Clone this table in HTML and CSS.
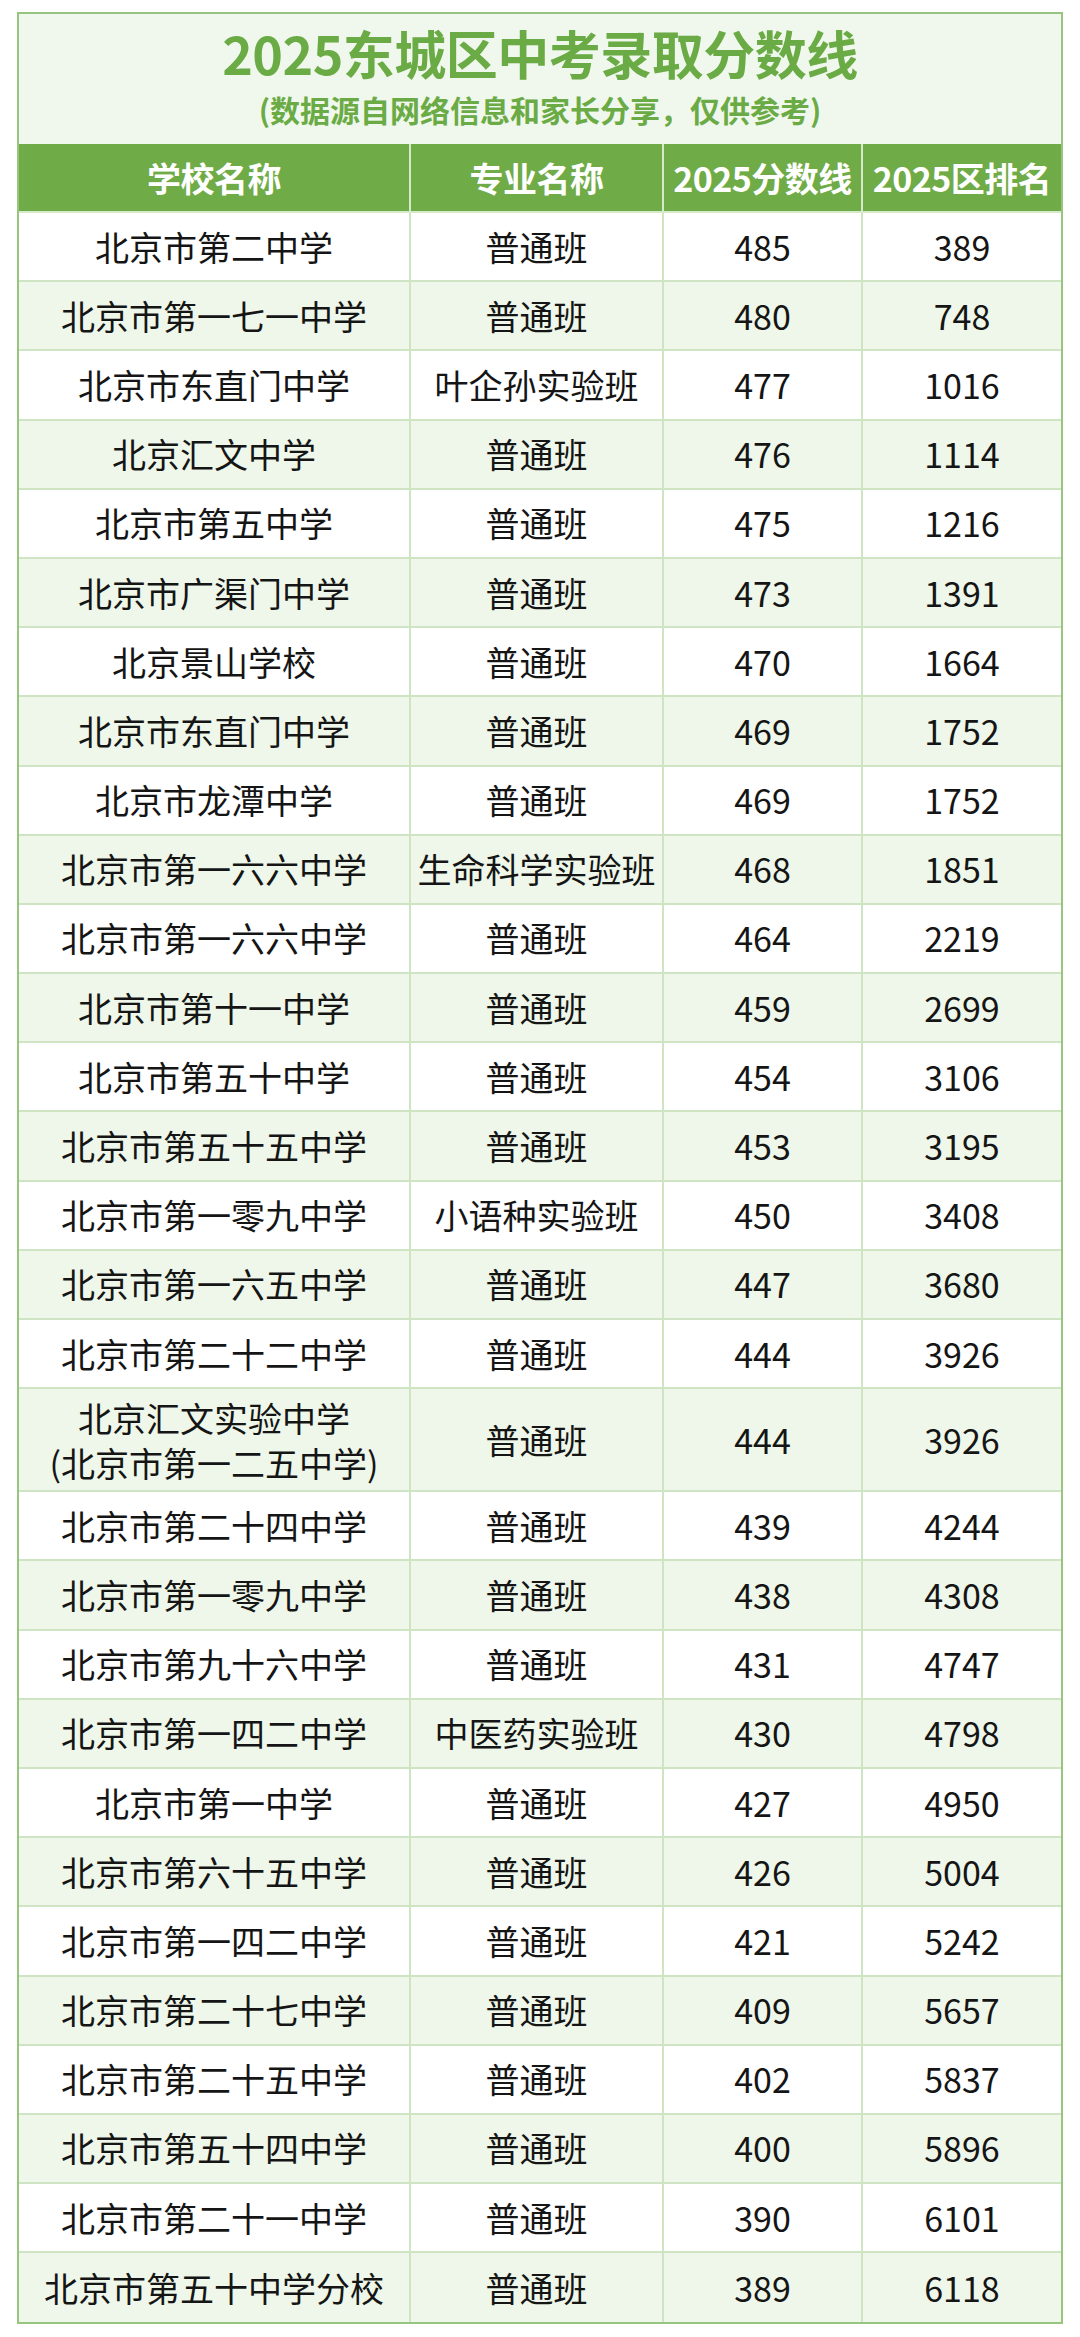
FILE: index.html
```html
<!DOCTYPE html>
<html lang="zh-CN">
<head>
<meta charset="utf-8">
<title>2025东城区中考录取分数线</title>
<link rel="stylesheet" href="styles.css">
</head>
<body>
<div class="sheet">
  <div class="title-box">
    <div class="title">2025东城区中考录取分数线</div>
    <div class="subtitle">(数据源自网络信息和家长分享，仅供参考)</div>
  </div>
  <div class="row head">
    <div class="cell">学校名称</div>
    <div class="cell">专业名称</div>
    <div class="cell">2025分数线</div>
    <div class="cell">2025区排名</div>
  </div>
  <div class="row"><div class="cell">北京市第二中学</div><div class="cell">普通班</div><div class="cell">485</div><div class="cell">389</div></div>
  <div class="row alt"><div class="cell">北京市第一七一中学</div><div class="cell">普通班</div><div class="cell">480</div><div class="cell">748</div></div>
  <div class="row"><div class="cell">北京市东直门中学</div><div class="cell">叶企孙实验班</div><div class="cell">477</div><div class="cell">1016</div></div>
  <div class="row alt"><div class="cell">北京汇文中学</div><div class="cell">普通班</div><div class="cell">476</div><div class="cell">1114</div></div>
  <div class="row"><div class="cell">北京市第五中学</div><div class="cell">普通班</div><div class="cell">475</div><div class="cell">1216</div></div>
  <div class="row alt"><div class="cell">北京市广渠门中学</div><div class="cell">普通班</div><div class="cell">473</div><div class="cell">1391</div></div>
  <div class="row"><div class="cell">北京景山学校</div><div class="cell">普通班</div><div class="cell">470</div><div class="cell">1664</div></div>
  <div class="row alt"><div class="cell">北京市东直门中学</div><div class="cell">普通班</div><div class="cell">469</div><div class="cell">1752</div></div>
  <div class="row"><div class="cell">北京市龙潭中学</div><div class="cell">普通班</div><div class="cell">469</div><div class="cell">1752</div></div>
  <div class="row alt"><div class="cell">北京市第一六六中学</div><div class="cell">生命科学实验班</div><div class="cell">468</div><div class="cell">1851</div></div>
  <div class="row"><div class="cell">北京市第一六六中学</div><div class="cell">普通班</div><div class="cell">464</div><div class="cell">2219</div></div>
  <div class="row alt"><div class="cell">北京市第十一中学</div><div class="cell">普通班</div><div class="cell">459</div><div class="cell">2699</div></div>
  <div class="row"><div class="cell">北京市第五十中学</div><div class="cell">普通班</div><div class="cell">454</div><div class="cell">3106</div></div>
  <div class="row alt"><div class="cell">北京市第五十五中学</div><div class="cell">普通班</div><div class="cell">453</div><div class="cell">3195</div></div>
  <div class="row"><div class="cell">北京市第一零九中学</div><div class="cell">小语种实验班</div><div class="cell">450</div><div class="cell">3408</div></div>
  <div class="row alt"><div class="cell">北京市第一六五中学</div><div class="cell">普通班</div><div class="cell">447</div><div class="cell">3680</div></div>
  <div class="row"><div class="cell">北京市第二十二中学</div><div class="cell">普通班</div><div class="cell">444</div><div class="cell">3926</div></div>
  <div class="row alt tall"><div class="cell two">北京汇文实验中学<br>(北京市第一二五中学)</div><div class="cell">普通班</div><div class="cell">444</div><div class="cell">3926</div></div>
  <div class="row"><div class="cell">北京市第二十四中学</div><div class="cell">普通班</div><div class="cell">439</div><div class="cell">4244</div></div>
  <div class="row alt"><div class="cell">北京市第一零九中学</div><div class="cell">普通班</div><div class="cell">438</div><div class="cell">4308</div></div>
  <div class="row"><div class="cell">北京市第九十六中学</div><div class="cell">普通班</div><div class="cell">431</div><div class="cell">4747</div></div>
  <div class="row alt"><div class="cell">北京市第一四二中学</div><div class="cell">中医药实验班</div><div class="cell">430</div><div class="cell">4798</div></div>
  <div class="row"><div class="cell">北京市第一中学</div><div class="cell">普通班</div><div class="cell">427</div><div class="cell">4950</div></div>
  <div class="row alt"><div class="cell">北京市第六十五中学</div><div class="cell">普通班</div><div class="cell">426</div><div class="cell">5004</div></div>
  <div class="row"><div class="cell">北京市第一四二中学</div><div class="cell">普通班</div><div class="cell">421</div><div class="cell">5242</div></div>
  <div class="row alt"><div class="cell">北京市第二十七中学</div><div class="cell">普通班</div><div class="cell">409</div><div class="cell">5657</div></div>
  <div class="row"><div class="cell">北京市第二十五中学</div><div class="cell">普通班</div><div class="cell">402</div><div class="cell">5837</div></div>
  <div class="row alt"><div class="cell">北京市第五十四中学</div><div class="cell">普通班</div><div class="cell">400</div><div class="cell">5896</div></div>
  <div class="row"><div class="cell">北京市第二十一中学</div><div class="cell">普通班</div><div class="cell">390</div><div class="cell">6101</div></div>
  <div class="row alt last"><div class="cell">北京市第五十中学分校</div><div class="cell">普通班</div><div class="cell">389</div><div class="cell">6118</div></div>
</div>
</body>
</html>
```

FILE: styles.css
```css
html, body {
  margin: 0;
  padding: 0;
  background: #ffffff;
}

body {
  font-family: "Noto Sans CJK SC", "Noto Sans", sans-serif;
  color: #151515;
}

.sheet {
  margin: 12px 17px 0 17px;
  width: 1046px;
  box-sizing: border-box;
  border: 2px solid #97c47f;
  background: #ffffff;
}

.title-box {
  height: 130px;
  box-sizing: border-box;
  background: #f0f7ec;
  display: flex;
  flex-direction: column;
  align-items: center;
  padding-top: 8px;
}

.title {
  font-size: 52px;
  font-weight: 700;
  color: #6aab45;
  line-height: 62px;
  letter-spacing: -0.5px;
}

.subtitle {
  font-size: 30px;
  font-weight: 700;
  color: #6aab45;
  line-height: 42px;
  margin-top: 4px;
}

.row {
  display: grid;
  grid-template-columns: 392px 253px 199px 1fr;
  height: 69.2px;
  box-sizing: border-box;
  border-bottom: 2px solid #cfe4c3;
  background: #ffffff;
}

.row.alt {
  background: #eef7e9;
}

.row.tall {
  height: 103px;
}

.row.last {
  border-bottom: none;
}

.row.head {
  height: 69px;
  background: #6fab47;
  border-bottom: 2px solid #d6e9cb;
}

.cell {
  display: flex;
  align-items: center;
  justify-content: center;
  text-align: center;
  font-size: 34px;
  line-height: 46px;
  border-right: 2px solid #cfe4c3;
  box-sizing: border-box;
  white-space: nowrap;
}

.cell:last-child {
  border-right: none;
}

.row.head .cell {
  color: #ffffff;
  font-weight: 700;
  border-right-color: #d6e9cb;
  letter-spacing: -0.5px;
}

.cell.two {
  line-height: 45px;
}
```
